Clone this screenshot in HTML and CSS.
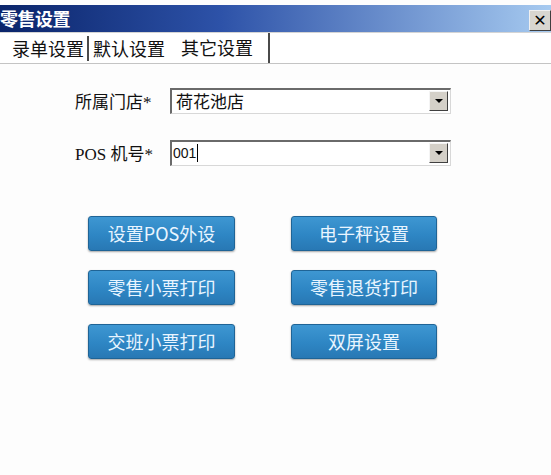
FILE: index.html
```html
<!DOCTYPE html>
<html lang="zh-CN">
<head>
<meta charset="utf-8">
<title>零售设置</title>
<link rel="stylesheet" href="styles.css">
</head>
<body>
<div class="window">
  <div class="titlebar">
    <span class="title">零售设置</span>
    <span class="close">✕</span>
  </div>
  <div class="tabs">
    <span class="tab tab-first">录单设置</span>
    <span class="sep sep-first"></span>
    <span class="tab tab-second">默认设置</span>
    <span class="tab tab-active">其它设置</span>
    <span class="sep sep-last"></span>
  </div>
  <div class="form">
    <div class="row">
      <span class="label">所属门店*</span>
      <div class="combo">
        <span class="value">荷花池店</span>
        <span class="drop"><span class="arrow"></span></span>
      </div>
    </div>
    <div class="row row-second">
      <span class="label">POS 机号*</span>
      <div class="combo">
        <span class="value value-num">001<span class="caret"></span></span>
        <span class="drop"><span class="arrow"></span></span>
      </div>
    </div>
  </div>
  <div class="buttons">
    <div class="btn">设置POS外设</div>
    <div class="btn">电子秤设置</div>
    <div class="btn">零售小票打印</div>
    <div class="btn">零售退货打印</div>
    <div class="btn">交班小票打印</div>
    <div class="btn">双屏设置</div>
  </div>
</div>
</body>
</html>
```

FILE: styles.css
```css
html, body {
  margin: 0;
  padding: 0;
  background: #fdfdfd;
}
.window {
  width: 551px;
  height: 475px;
  overflow: hidden;
  padding-top: 5px;
  box-sizing: border-box;
  font-family: "Noto Sans CJK SC", sans-serif;
}
.titlebar {
  height: 27px;
  background: linear-gradient(to right, #0a246a 0%, #2d52a8 40%, #a6caf0 100%);
  display: flex;
  align-items: center;
  justify-content: space-between;
}
.title {
  color: #fff;
  font-weight: bold;
  font-size: 18px;
  line-height: 27px;
  margin-left: 0;
  letter-spacing: -0.5px;
}
.close {
  width: 20px;
  height: 19px;
  margin-top: 3px;
  background: #d8d6d0;
  border-right: 1px solid #404040;
  border-bottom: 1px solid #404040;
  border-top: 1px solid #f0f0f0;
  border-left: 1px solid #f0f0f0;
  color: #000;
  font-family: "DejaVu Sans", sans-serif;
  font-weight: bold;
  font-size: 16px;
  line-height: 19px;
  text-align: center;
  box-sizing: content-box;
}
.tabs {
  height: 30px;
  border-top: 1px solid #d4d4d4;
  border-bottom: 1px solid #c4c4c4;
  display: flex;
  align-items: center;
  background: #fff;
}
.tab {
  font-size: 18px;
  line-height: 24px;
  color: #111;
}
.tab-first { margin-left: 12px; }
.tab-second { margin-left: 4px; }
.tab-active { margin-left: 16px; margin-top: -3px; }
.sep {
  width: 2px;
  height: 25px;
  background: #4a4a4a;
}
.sep-first { margin-left: 3px; }
.sep-last { margin-left: 15px; height: 30px; }
.form {
  padding-top: 23px;
  padding-left: 75px;
}
.row {
  display: flex;
  align-items: center;
  height: 27px;
}
.row-second { margin-top: 25px; }
.label {
  width: 95px;
  font-family: "Liberation Serif", "Noto Sans CJK SC", serif;
  font-size: 17px;
  color: #111;
}
.combo {
  width: 278px;
  height: 23px;
  border-top: 2px solid #6a6a6a;
  border-left: 2px solid #6a6a6a;
  border-bottom: 1px solid #d8d8d8;
  border-right: 1px solid #d8d8d8;
  background: #fff;
  display: flex;
  align-items: center;
  justify-content: space-between;
}
.value {
  font-size: 17px;
  line-height: 22px;
  padding-left: 4px;
  color: #111;
  display: flex;
  align-items: center;
}
.value-num {
  font-family: "Liberation Sans", sans-serif;
  font-size: 14px;
  padding-left: 1px;
}
.caret {
  display: inline-block;
  width: 1px;
  height: 18px;
  background: #000;
  margin-left: 1px;
}
.drop {
  width: 17px;
  height: 18px;
  margin-right: 2px;
  background: #d4d0c8;
  border-top: 1px solid #f4f4f4;
  border-left: 1px solid #f4f4f4;
  border-right: 1px solid #404040;
  border-bottom: 1px solid #404040;
  display: flex;
  align-items: center;
  justify-content: center;
}
.arrow {
  width: 0;
  height: 0;
  border-left: 4px solid transparent;
  border-right: 4px solid transparent;
  border-top: 4px solid #000;
}
.buttons {
  margin-top: 50px;
  padding-left: 88px;
  display: grid;
  grid-template-columns: 147px 146px;
  column-gap: 56px;
  row-gap: 19px;
}
.btn {
  height: 33px;
  border: 1px solid #1f6496;
  border-radius: 3px;
  background: linear-gradient(to bottom, #3e97d2 0%, #2e86c4 55%, #2878b4 100%);
  box-shadow: 0 1px 2px rgba(0, 0, 0, 0.35);
  color: #e9f5ff;
  font-size: 18px;
  line-height: 33px;
  text-align: center;
}
```
